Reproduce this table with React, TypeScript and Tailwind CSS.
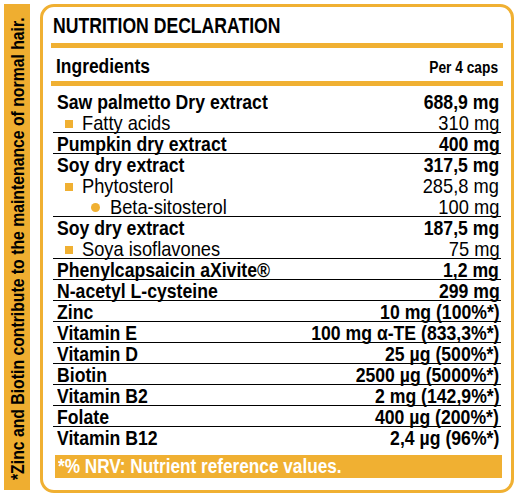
const rows = [
  { name: 'Saw palmetto Dry extract', value: '688,9 mg', level: 0, line: false },
  { name: 'Fatty acids', value: '310 mg', level: 1, line: true },
  { name: 'Pumpkin dry extract', value: '400 mg', level: 0, line: true },
  { name: 'Soy dry extract', value: '317,5 mg', level: 0, line: false },
  { name: 'Phytosterol', value: '285,8 mg', level: 1, line: false },
  { name: 'Beta-sitosterol', value: '100 mg', level: 2, line: true },
  { name: 'Soy dry extract', value: '187,5 mg', level: 0, line: false },
  { name: 'Soya isoflavones', value: '75 mg', level: 1, line: true },
  { name: 'Phenylcapsaicin aXivite®', value: '1,2 mg', level: 0, line: true },
  { name: 'N-acetyl L-cysteine', value: '299 mg', level: 0, line: true },
  { name: 'Zinc', value: '10 mg (100%*)', level: 0, line: true },
  { name: 'Vitamin E', value: '100 mg α-TE (833,3%*)', level: 0, line: true },
  { name: 'Vitamin D', value: '25 µg (500%*)', level: 0, line: true },
  { name: 'Biotin', value: '2500 µg (5000%*)', level: 0, line: true },
  { name: 'Vitamin B2', value: '2 mg (142,9%*)', level: 0, line: true },
  { name: 'Folate', value: '400 µg (200%*)', level: 0, line: true },
  { name: 'Vitamin B12', value: '2,4 µg (96%*)', level: 0, line: false },
];

// the label uses a condensed face; squeeze Liberation Sans to get close
function Row({ name, value, level, line }: { name: string; value: string; level: number; line: boolean }) {
  const bold = level === 0;
  const squeeze = bold ? 'font-bold scale-x-[0.84]' : 'font-normal scale-x-[0.87]';
  return (
    <div className={`h-[21px] flex items-center justify-between leading-[21px] text-[21px] whitespace-nowrap ${line ? 'border-b border-black' : ''}`}>
      <div className={`flex items-center ${level === 0 ? 'pl-[4px]' : level === 1 ? 'pl-[12px]' : 'pl-[38px]'}`}>
        {level === 1 && <span className="w-[8px] h-[8px] bg-[#f0b032] mr-[9px] mt-[3px]" />}
        {level === 2 && <span className="w-[9px] h-[9px] rounded-full bg-[#f0b032] mr-[10px] mt-[3px]" />}
        <span className={`inline-block origin-left ${squeeze}`}>{name}</span>
      </div>
      <span className={`inline-block origin-right pr-[2px] ${squeeze}`}>{value}</span>
    </div>
  );
}

export default function App() {
  return (
    <div className="w-[520px] h-[503px] bg-white flex pl-[4px] pt-[4px] text-black font-['Liberation_Sans',Arial,sans-serif]">
      {/* side note strip */}
      <div className="w-[26px] h-[486px] bg-[#efae30] flex flex-col justify-center items-center pt-[4px] overflow-hidden">
        <span className="[writing-mode:vertical-rl] rotate-180 scale-y-[0.83] font-bold text-[19px] leading-none whitespace-nowrap">
          *Zinc and Biotin contribute to the maintenance of normal hair.
        </span>
      </div>

      <div className="ml-[10px] w-[474px] h-[489px] border-[3px] border-[#f0b032] rounded-[14px] px-[8px] flex flex-col">
        <div className="h-[36px] pt-[8px] pl-[2px] text-[22px] leading-[21px] font-bold whitespace-nowrap">
          <span className="inline-block origin-left scale-x-[0.8]">NUTRITION DECLARATION</span>
        </div>
        <div className="h-[5px] bg-[#f0b032]" />
        <div className="h-[33px] pt-[7px] px-[5px] flex items-baseline justify-between font-bold leading-[21px] whitespace-nowrap">
          <span className="inline-block origin-left scale-x-[0.83] text-[21px]">Ingredients</span>
          <span className="inline-block origin-right scale-x-[0.86] text-[16px]">Per 4 caps</span>
        </div>
        <div className="h-[5px] bg-[#f0b032]" />

        <div className="mt-[5px] mx-[2px]">
          {rows.map((r, i) => (
            <Row key={i} {...r} />
          ))}
        </div>

        <div className="mt-[7px] ml-[4px] mr-[1px] h-[23px] bg-[#f0b032] pl-[3px] text-white font-bold text-[20px] leading-[23px] whitespace-nowrap">
          <span className="inline-block origin-left scale-x-[0.86]">*% NRV: Nutrient reference values.</span>
        </div>
      </div>
    </div>
  );
}
